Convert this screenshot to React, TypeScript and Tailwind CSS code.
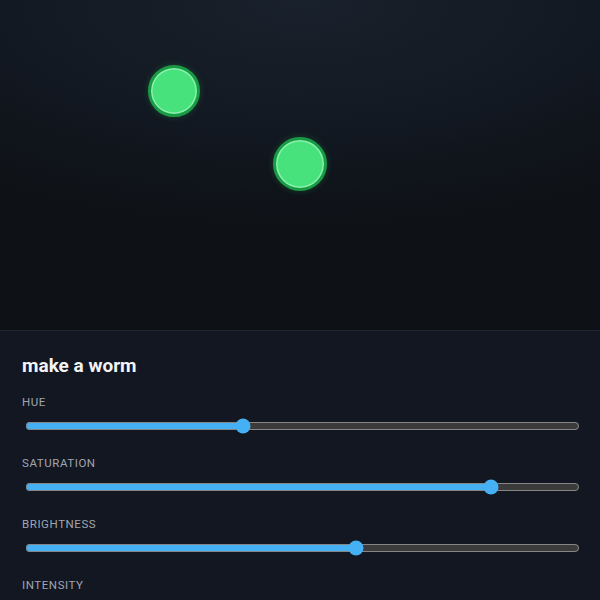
import React from "react";

type Control = { label: string; value: number };

const controls: Control[] = [
  { label: "Hue", value: 39 },
  { label: "Saturation", value: 85 },
  { label: "Brightness", value: 60 },
  { label: "Intensity", value: 50 },
];

function Segment({ left, top, size }: { left: number; top: number; size: number }) {
  return (
    <div
      className="absolute rounded-full bg-[#47e27c] border-[3px] border-[#1a9a45] shadow-[inset_0_0_0_1.5px_#8ef0b0,0_0_6px_rgba(34,197,94,0.25)]"
      style={{ left, top, width: size, height: size }}
    />
  );
}

export default function App() {
  return (
    <div className="w-[600px] h-[600px] overflow-hidden bg-[#121722] font-['Roboto','Liberation_Sans',sans-serif]">
      <div className="relative h-[331px] border-b border-[#1f2733] bg-[radial-gradient(ellipse_90%_70%_at_50%_0%,#19212c_0%,#121821_60%,#0e1115_100%)]">
        <Segment left={148} top={65} size={52} />
        <Segment left={273} top={137} size={54} />
      </div>
      <div className="px-[22px] pt-[21px]">
        <h1 className="text-[19px] leading-7 font-bold text-[#f3f4f6] mb-[14px]">make a worm</h1>
        <div className="flex flex-col gap-[21px]">
          {controls.map((c) => (
            <div key={c.label} className="flex flex-col gap-2">
              <span className="text-[11.5px] leading-4 uppercase tracking-[0.05em] text-[#a0a6b1]">
                {c.label}
              </span>
              <input
                type="range"
                min={0}
                max={100}
                defaultValue={c.value}
                className="ml-[3px] w-[555px] h-4 [color-scheme:dark] accent-[#45b0f3]"
              />
            </div>
          ))}
        </div>
      </div>
    </div>
  );
}
